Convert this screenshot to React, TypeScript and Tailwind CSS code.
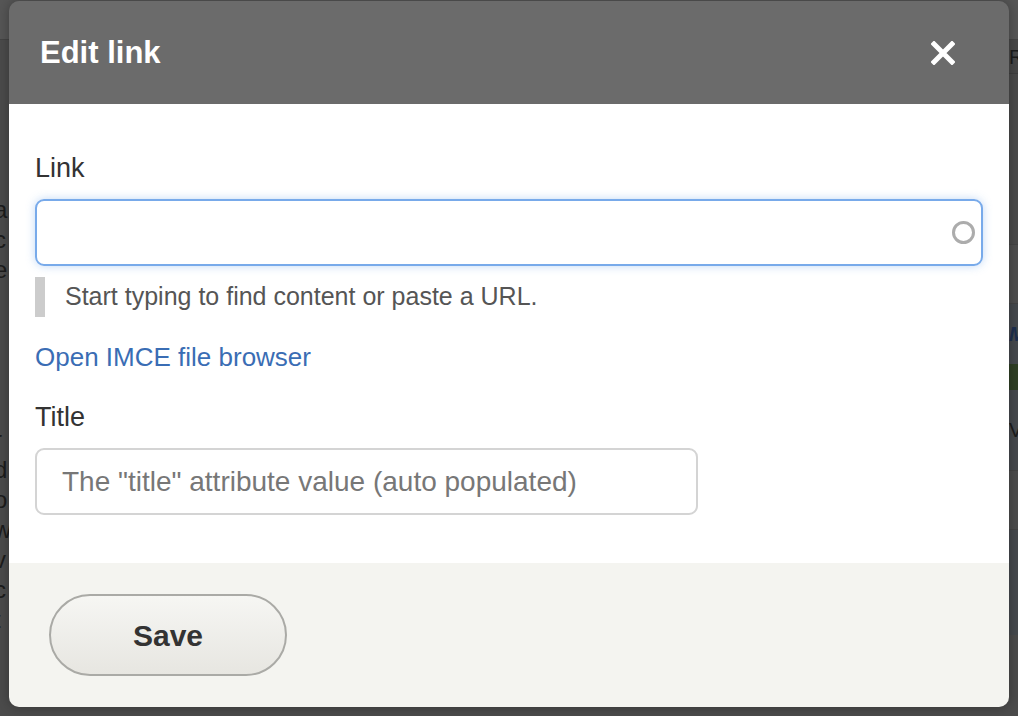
import React from "react";

const font = { fontFamily: '"Liberation Sans", Arial, Helvetica, sans-serif' };

export default function App() {
  return (
    <div
      className="relative w-[1018px] h-[716px] overflow-hidden bg-[#4b4b4b]"
      style={font}
    >
      {/* underlying page (darkened by overlay) */}
      <div className="h-[40px] bg-[#565656] border-b border-[#444]" />
      <div className="flex">
        <div className="w-[9px] overflow-hidden text-[24px] leading-[30px] text-[#1c1c1c]">
          <div className="h-[155px]" />
          <div className="-ml-[6px]">a</div>
          <div className="-ml-[6px]">c</div>
          <div className="-ml-[6px]">e</div>
          <div className="h-[140px]" />
          <div className="-ml-[6px]">r</div>
          <div className="-ml-[6px]">d</div>
          <div className="-ml-[6px]">o</div>
          <div className="-ml-[6px]">w</div>
          <div className="-ml-[6px]">v</div>
          <div className="-ml-[6px]">c</div>
          <div className="-ml-[6px]">t</div>
        </div>
        <div className="flex-1" />
        <div className="w-[9px] flex flex-col text-[20px] text-[#1c1c1c]">
          <div className="h-[34px] bg-[#474747] border-b border-[#3f3f3f] leading-[34px]">R</div>
          <div className="h-[170px] bg-[#4a4a4a]" />
          <div className="h-[60px] bg-[#4e4e4e] border-y border-[#444]" />
          <div className="h-[60px] bg-[#45494d] font-bold italic text-[#1d2f4f] leading-[60px]">M</div>
          <div className="h-[26px] bg-[#2f3f25]" />
          <div className="h-[80px] bg-[#45494d] leading-[80px]">V</div>
          <div className="h-[60px] bg-[#4c4c4c] border-y border-[#444]" />
          <div className="flex-1 bg-[#45494d]" />
        </div>
      </div>

      {/* dialog */}
      <div className="absolute left-[9px] top-[1px] w-[1000px] h-[706px] rounded-[10px] overflow-hidden flex flex-col shadow-[0_0_12px_rgba(0,0,0,0.3)]">
        <div className="h-[103px] shrink-0 bg-[#6b6b6b] flex items-center justify-between pl-[31px] pr-[54px]">
          <h1 className="text-[31px] font-bold text-white leading-none">Edit link</h1>
          <button className="w-[24px] h-[24px] flex items-center justify-center" aria-label="Close">
            <svg width="24" height="24" viewBox="0 0 24 24">
              <path
                d="M3 3 L21 21 M21 3 L3 21"
                stroke="white"
                strokeWidth="5"
                strokeLinecap="square"
              />
            </svg>
          </button>
        </div>

        <div className="h-[459px] shrink-0 bg-white px-[26px] pt-[48px] flex flex-col">
          <label className="text-[27px] leading-[32px] text-[#333]">Link</label>
          <div className="mt-[15px] h-[67px] rounded-[9px] border-2 border-[#78aaea] shadow-[0_0_10px_rgba(120,170,234,0.45)] flex items-center justify-end pr-[6px]">
            <div className="w-[23px] h-[23px] rounded-full border-[3px] border-[#acacac] blur-[0.5px]" />
          </div>
          <div className="mt-[11px] h-[40px] border-l-[10px] border-[#cccccc] pl-[20px] flex items-center">
            <span className="text-[25px] text-[#555]">Start typing to find content or paste a URL.</span>
          </div>
          <a className="mt-[25px] text-[26px] leading-[30px] text-[#3a6db4] self-start" href="#">
            Open IMCE file browser
          </a>
          <label className="mt-[29px] text-[27px] leading-[32px] text-[#333]">Title</label>
          <div className="mt-[15px] w-[663px] h-[67px] rounded-[9px] border-2 border-[#d4d4d4] flex items-center pl-[25px]">
            <span className="text-[28px] text-[#777]">
              The "title" attribute value (auto populated)
            </span>
          </div>
        </div>

        <div className="flex-1 bg-[#f4f4f0] pl-[40px] pt-[31px]">
          <button className="w-[238px] h-[82px] rounded-full border-2 border-[#aaaaa6] bg-gradient-to-b from-[#f6f6f3] to-[#e7e6e1] text-[30px] font-bold text-[#333]">
            Save
          </button>
        </div>
      </div>
    </div>
  );
}
